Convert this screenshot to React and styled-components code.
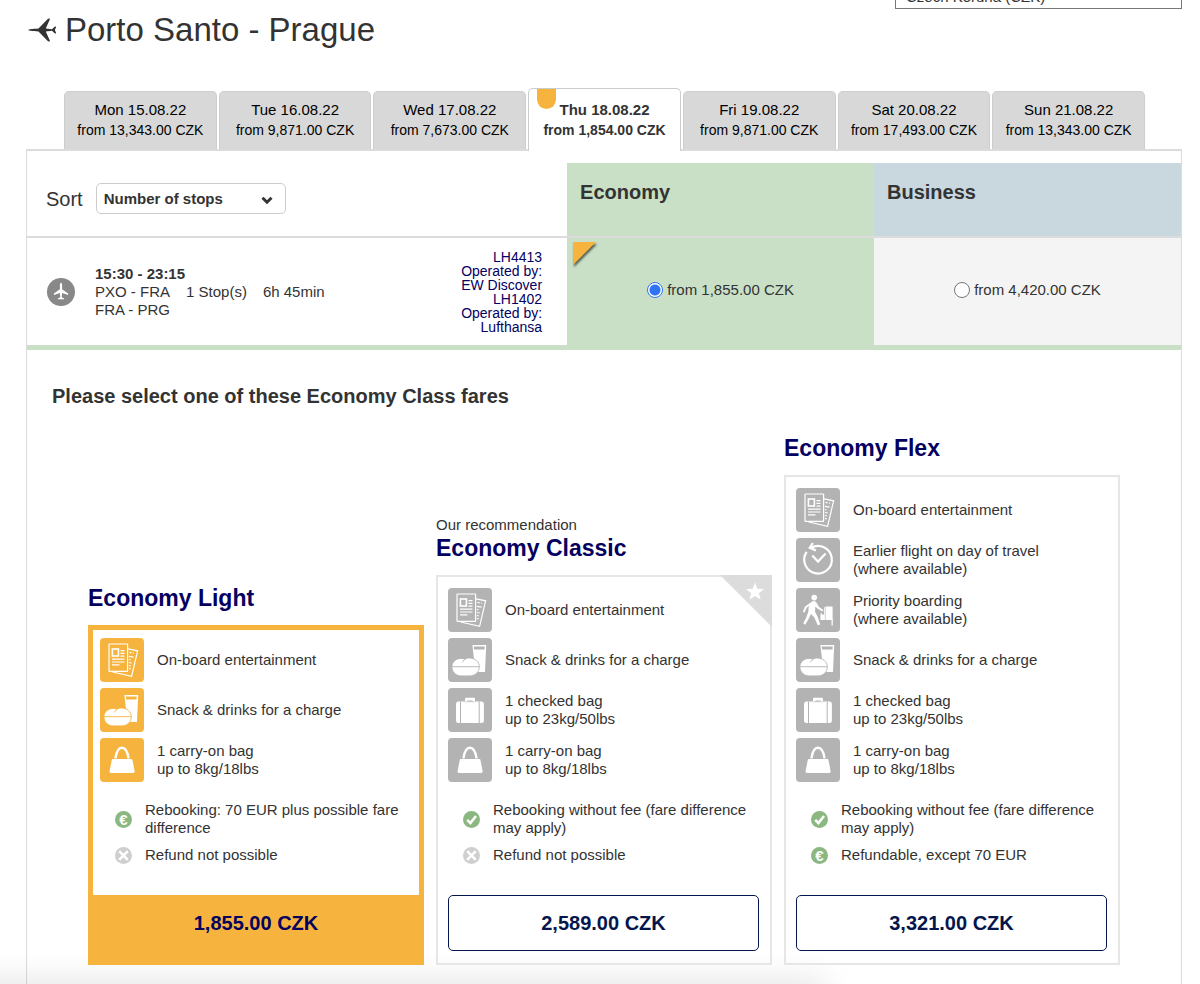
import React from "react";
import styled, { createGlobalStyle, css } from "styled-components";

const color = {
  text: "#333333",
  navy: "#05005f",
  ink: "#05164d",
  line: "#dcdcdc",
  tab: "#d8d8d8",
  green: "#c9e0c6",
  blue: "#c9d7df",
  orange: "#f6b43e",
  icon: "#b3b3b3",
  ok: "#8bb780",
  off: "#cfcfcf",
};

const GlobalStyle = createGlobalStyle`
  *, *::before, *::after { box-sizing: border-box; }
  body {
    margin: 0;
    background: #fff;
    color: ${color.text};
    font: 15px/18px "Liberation Sans", Arial, Helvetica, sans-serif;
  }
  button, select, input { font: inherit; color: inherit; margin: 0; }
  h1, h2, h3, p, ul { margin: 0; padding: 0; }
  ul { list-style: none; }
`;

const Page = styled.main`
  position: relative;
  display: flex;
  flex-direction: column;
  min-height: 100vh;
  padding: 0 18px 0 26px;
  overflow: hidden;
`;

const TopBar = styled.div`
  display: flex;
  justify-content: flex-end;
  align-items: flex-end;
  height: 9px;
  overflow: hidden;
`;

const CurrencySelect = styled.select`
  flex: none;
  appearance: none;
  width: 287px;
  height: 24px;
  padding: 0 10px;
  border: 1px solid #777;
  border-radius: 0;
  background: #fff;
`;

const RouteTitle = styled.h1`
  display: flex;
  align-items: center;
  gap: 8px;
  padding: 1px 0 0 2px;
  font-size: 33px;
  font-weight: 400;
  line-height: 40px;
`;

const Tabs = styled.nav`
  display: flex;
  align-items: flex-end;
  gap: 2px;
  margin-top: 38px;
  padding: 0 37px 0 38px;
`;

const Tab = styled.button`
  position: relative;
  flex: 1 1 0;
  min-width: 0;
  height: 58px;
  padding: 0 0 1px;
  border: 1px solid #cecece;
  border-bottom: 0;
  border-radius: 5px 5px 0 0;
  background: ${color.tab};
  color: #000;
  line-height: 20px;
  white-space: nowrap;
  ${(p) =>
    p.$active &&
    css`
      height: 63px;
      margin-bottom: -2px;
      padding-bottom: 0;
      border-color: #ccc;
      background: #fff;
      color: ${color.text};
      font-weight: 700;
    `}
`;

const TabDay = styled.span`
  display: block;
`;

const TabPrice = styled.span`
  display: block;
  font-size: 14px;
`;

const TabMarker = styled.span`
  position: absolute;
  top: 0;
  left: 8px;
  width: 19px;
  height: 20px;
  border-radius: 0 0 10px 10px;
  background: ${color.orange};
`;

const Panel = styled.section`
  flex: 1;
  padding-top: 12px;
  border: 1px solid ${color.line};
  border-top-width: 2px;
  border-bottom: 0;
`;

const FlightTable = styled.table`
  width: 100%;
  table-layout: fixed;
  border-collapse: separate;
  border-spacing: 0;
`;

const HeadCell = styled.th`
  height: 75px;
  padding: ${(p) => (p.$sort ? "0 0 2px 19px" : "17px 13px 0")};
  vertical-align: ${(p) => (p.$sort ? "middle" : "top")};
  border-bottom: 2px solid ${color.line};
  background: ${(p) => p.$bg || "transparent"};
  text-align: left;
  font-size: 20px;
  line-height: 24px;
  font-weight: ${(p) => (p.$sort ? 400 : 700)};
`;

const SortBox = styled.div`
  display: flex;
  align-items: center;
  gap: 13px;
`;

const SelectWrap = styled.span`
  position: relative;
  width: 190px;
  height: 31px;
  svg {
    position: absolute;
    right: 13px;
    top: 13px;
    pointer-events: none;
  }
`;

const SortSelect = styled.select`
  appearance: none;
  display: block;
  width: 100%;
  height: 100%;
  padding: 0 30px 0 7px;
  border: 1px solid #ccc;
  border-radius: 5px;
  background: #fff;
  font-size: 15px;
  font-weight: 700;
`;

const FlightCell = styled.td`
  height: 107px;
  padding: 0 25px 0 20px;
`;

const Flight = styled.div`
  display: flex;
  align-items: center;
  gap: 20px;
`;

const FlightTimes = styled.div`
  flex: 1;
`;

const Leg = styled.p`
  display: flex;
  gap: 16px;
`;

const Carriers = styled.p`
  color: ${color.navy};
  text-align: right;
  font-size: 14px;
  line-height: 14px;
`;

const PriceCell = styled.td`
  position: relative;
  padding: 0;
  background: ${(p) => p.$bg};
  text-align: center;
`;

const CornerFlag = styled.svg`
  position: absolute;
  top: 4px;
  left: 6px;
  filter: drop-shadow(1px 2px 1px rgba(0, 0, 0, 0.6));
`;

const RadioLabel = styled.label`
  display: inline-flex;
  align-items: center;
  gap: 4px;
`;

const Radio = styled.input`
  appearance: none;
  width: 16px;
  height: 16px;
  border: 1px solid #767676;
  border-radius: 50%;
  background: #fff;
  &:checked {
    border-color: #2f74f5;
    background: radial-gradient(circle, #2f74f5 5px, #fff 6px);
  }
`;

const Fares = styled.section`
  padding: 34px 61px 19px;
  border-top: 5px solid ${color.green};
`;

const FaresHeading = styled.h2`
  margin: 0 0 26px -36px;
  font-size: 20px;
  line-height: 24px;
`;

const FareList = styled.div`
  display: grid;
  grid-template-columns: repeat(3, 1fr);
  align-items: end;
  gap: 12px;
`;

const FareTitle = styled.h3`
  margin-bottom: 13px;
  color: ${color.navy};
  font-size: 23px;
  line-height: 28px;
`;

const Card = styled.div`
  position: relative;
  padding: ${(p) => (p.$selected ? "8px 7px 0 7px" : "11px 11px 12px 10px")};
  border: ${(p) => (p.$selected ? `5px solid ${color.orange}` : `2px solid #e6e6e6`)};
`;

const Perks = styled.ul`
  display: grid;
  gap: 6px;
`;

const Perk = styled.li`
  display: flex;
  align-items: center;
  gap: 13px;
  white-space: pre-line;
`;

const PerkIcon = styled.svg`
  flex: none;
  width: 44px;
  height: 44px;
  border-radius: 4px;
  background: ${(p) => p.$bg};
  color: ${(p) => p.$bg};
`;

const Terms = styled.ul`
  display: grid;
  gap: 9px;
  margin: 19px 0 31px;
  padding-left: 15px;
`;

const Term = styled.li`
  display: flex;
  align-items: center;
  gap: 13px;
`;

const Badge = styled.span`
  display: flex;
  flex: none;
  align-items: center;
  justify-content: center;
  width: 17px;
  height: 17px;
  border-radius: 50%;
  background: ${(p) => p.$bg};
  color: #fff;
  font-size: 15px;
  font-weight: 700;
  line-height: 17px;
`;

const PriceButton = styled.button`
  display: block;
  width: 100%;
  height: 56px;
  border: 1px solid ${color.ink};
  border-radius: 5px;
  background: #fff;
  color: ${color.ink};
  font-size: 20px;
  font-weight: 700;
  line-height: 24px;
  ${(p) =>
    p.$selected &&
    css`
      width: auto;
      min-width: calc(100% + 14px);
      height: 65px;
      margin: 0 -7px;
      padding-bottom: 10px;
      border: 0;
      border-radius: 0;
      background: ${color.orange};
      color: ${color.navy};
    `}
`;

const Ribbon = styled.svg`
  position: absolute;
  top: -2px;
  right: -2px;
`;

const BottomShade = styled.div`
  position: absolute;
  left: -40px;
  bottom: -20px;
  width: 72%;
  height: 20px;
  box-shadow: 0 0 32px 2px rgba(0, 0, 0, 0.13);
  pointer-events: none;
`;

const drawings = {
  news: (
    <g fill="none" stroke="#fff" strokeWidth="1.2">
      <path d="M28 10.8 37.6 12.8 31.6 38.4 12.6 34" />
      <path d="M29.5 14.4l2.2.4M33 15l1 .2M29 18.3l4.6.9M29 21.5l1.5.3M29 24.5l2.8.5M29 27.5l1.8.3M29 30.5l1.8.3" />
      <rect x="9" y="6" width="18.6" height="27.4" rx="0.6" />
      <rect x="12.4" y="11" width="6" height="7" strokeWidth="1.6" />
      <path d="M20.5 12.6h4M20.5 15.4h4M20.5 18.2h4M12 21.2h12.5M12 24h12.5M12 26.8h7.5" />
    </g>
  ),
  snack: (
    <g>
      <path fill="#fff" fillRule="evenodd" d="M24.4 7H38.2L37 34H27.4zM25.8 8.6l.3 3h10.400l.2-3z" />
      <path
        fill="#fff"
        stroke="currentColor"
        strokeWidth="0.9"
        d="M3.900 28.600C3.900 23.600 8.500 20.400 13 20.400 14.600 20.400 16 20.700 17 21.300 18.200 20.300 19.800 19.900 21.600 20 27 20.300 31.300 23.600 31.300 28.600 31.300 34.200 27.200 37.900 22 37.900H13C8 37.900 3.900 34.200 3.900 28.600z"
      />
      <path stroke="currentColor" strokeWidth="0.9" fill="none" d="M4 28.700h27.200M17 21.300Q15.200 22.300 14.400 24.400" />
    </g>
  ),
  checked: (
    <g>
      <path fill="#fff" fillRule="evenodd" d="M17 14v-3.200q0-1 1-1h8q1 0 1 1V14zM19.500 14h5v-1.600h-5z" />
      <rect x="8" y="13.600" width="27.900" height="21.400" rx="2.500" fill="#fff" />
      <path stroke="currentColor" strokeWidth="1" d="M12.500 13.600V35M31.200 13.600V35" />
      <path stroke="currentColor" strokeWidth="0.600" d="M17 13.800h10" />
    </g>
  ),
  carry: (
    <g>
      <path fill="none" stroke="#fff" strokeWidth="2.400" d="M15.400 20.400C16.500 13 19 9.800 21.900 9.800S27.500 13 28.600 20.400" />
      <path fill="#fff" d="M12.600 21h18.800q.8 0 1 .8l2.200 11.200q.3 2-1.700 2H11.300q-2 0-1.700-2l2.200-11.200q.2-.8.8-.8z" />
    </g>
  ),
  earlier: (
    <g fill="none" stroke="#fff" strokeWidth="2.200">
      <path d="M10.700 13.800A13.800 13.800 0 1 0 15 9.800" />
      <path d="M16.800 5 13.800 9.700 19.900 12.500" />
      <path d="M16.300 17.600 22 23.600 29.600 15.600" />
    </g>
  ),
  priority: (
    <g fill="#fff">
      <circle cx="18.200" cy="9.600" r="2.800" />
      <path d="M16.200 13.400q2.200-.8 3.900.6l2.800 4.700 4.600 3.500-1 1.400-5.200-3.200-2-2-.2 5.700 2.600 4.600 2.500 7.800-2.400.8-3.600-8-3.200-3.200-2.600 5.200-3.200 5.400-2-1.500 3.100-5.600 2-6.200.5-6-2 2.300-2.300 4.700-1.700-.5 2.200-5.500z" />
      <path d="M29.600 18.400h7v13.600h-7z" />
      <path d="M24.600 26.200l4 .6v5.200h-4zM35.500 31h1.300v6.500h-1.300z" />
      <path fill="none" stroke="#fff" strokeWidth="1" d="M25.200 25v7M28.700 19v13" />
    </g>
  ),
};

const perkText = {
  news: "On-board entertainment",
  earlier: "Earlier flight on day of travel\n(where available)",
  priority: "Priority boarding\n(where available)",
  snack: "Snack & drinks for a charge",
  checked: "1 checked bag\nup to 23kg/50lbs",
  carry: "1 carry-on bag\nup to 8kg/18lbs",
};

const tabs = [
  ["Mon 15.08.22", "from 13,343.00 CZK"],
  ["Tue 16.08.22", "from 9,871.00 CZK"],
  ["Wed 17.08.22", "from 7,673.00 CZK"],
  ["Thu 18.08.22", "from 1,854.00 CZK"],
  ["Fri 19.08.22", "from 9,871.00 CZK"],
  ["Sat 20.08.22", "from 17,493.00 CZK"],
  ["Sun 21.08.22", "from 13,343.00 CZK"],
];

const fares = [
  {
    name: "Economy Light",
    selected: true,
    perks: ["news", "snack", "carry"],
    terms: [
      ["fee", "Rebooking: 70 EUR plus possible fare difference"],
      ["no", "Refund not possible"],
    ],
    price: "1,855.00 CZK",
  },
  {
    name: "Economy Classic",
    recommended: true,
    perks: ["news", "snack", "checked", "carry"],
    terms: [
      ["yes", "Rebooking without fee (fare difference may apply)"],
      ["no", "Refund not possible"],
    ],
    price: "2,589.00 CZK",
  },
  {
    name: "Economy Flex",
    perks: ["news", "earlier", "priority", "snack", "checked", "carry"],
    terms: [
      ["yes", "Rebooking without fee (fare difference may apply)"],
      ["fee", "Refundable, except 70 EUR"],
    ],
    price: "3,321.00 CZK",
  },
];

function TermBadge({ kind }) {
  if (kind === "fee") return <Badge $bg={color.ok}>€</Badge>;
  return (
    <Badge $bg={kind === "yes" ? color.ok : color.off}>
      <svg width="17" height="17" fill="none" stroke="#fff" strokeWidth="2.600" aria-hidden="true">
        <path d={kind === "yes" ? "M4.200 8.800 7.400 12 13 5" : "M4.200 4.200l8.600 8.600M12.800 4.200l-8.600 8.600"} />
      </svg>
    </Badge>
  );
}

function Fare({ fare }) {
  return (
    <article>
      {fare.recommended && <p>Our recommendation</p>}
      <FareTitle>{fare.name}</FareTitle>
      <Card $selected={fare.selected}>
        {fare.recommended && (
          <Ribbon width="52" height="52" aria-hidden="true">
            <path fill={color.line} d="M0 0h52v52z" />
            <path fill="#fff" d="M35 7.500l2.300 6.200 6.700.3-5.200 4.200 1.800 6.400-5.600-3.700-5.600 3.700 1.800-6.400L26 14l6.700-.3z" />
          </Ribbon>
        )}
        <Perks>
          {fare.perks.map((id) => (
            <Perk key={id}>
              <PerkIcon viewBox="0 0 44 44" $bg={fare.selected ? color.orange : color.icon} aria-hidden="true">
                {drawings[id]}
              </PerkIcon>
              {perkText[id]}
            </Perk>
          ))}
        </Perks>
        <Terms>
          {fare.terms.map(([kind, text]) => (
            <Term key={text}>
              <TermBadge kind={kind} />
              <span>{text}</span>
            </Term>
          ))}
        </Terms>
        <PriceButton type="button" $selected={fare.selected}>
          {fare.price}
        </PriceButton>
      </Card>
    </article>
  );
}

export default function App() {
  return (
    <>
      <GlobalStyle />
      <Page>
        <BottomShade />
        <TopBar>
          <CurrencySelect aria-label="Currency">
            <option>Czech Koruna (CZK)</option>
          </CurrencySelect>
        </TopBar>
        <RouteTitle>
          <svg width="29" height="24" viewBox="0 0 29 24" fill={color.text} aria-hidden="true">
            <path d="M0 12C1.500 11 3.500 10.900 10.500 10.500L20 .8Q21.500 0 22 .9L17.800 10.400 24 11.300 26.300 8.900Q27.600 8.200 28.200 8.800L26.900 12 28.200 15.200Q27.600 15.800 26.300 15.100L24 12.700 17.800 13.600 22 23.100Q21.500 24 20 23.200L10.500 13.500C3.500 13.100 1.500 13 0 12z" />
          </svg>
          Porto Santo - Prague
        </RouteTitle>
        <Tabs aria-label="Departure day">
          {tabs.map(([day, price], i) => (
            <Tab key={day} type="button" $active={i === 3} aria-pressed={i === 3}>
              {i === 3 && <TabMarker />}
              <TabDay>{day}</TabDay>
              <TabPrice>{price}</TabPrice>
            </Tab>
          ))}
        </Tabs>
        <Panel>
          <FlightTable>
            <colgroup>
              <col width="46.800%" />
              <col width="26.600%" />
              <col width="26.600%" />
            </colgroup>
            <thead>
              <tr>
                <HeadCell $sort>
                  <SortBox>
                    <label htmlFor="sort">Sort</label>
                    <SelectWrap>
                      <SortSelect id="sort">
                        <option>Number of stops</option>
                      </SortSelect>
                      <svg width="12" height="9" fill="none" stroke={color.text} strokeWidth="3" aria-hidden="true">
                        <path d="M1.500 1.800 6 6.200 10.500 1.800" />
                      </svg>
                    </SelectWrap>
                  </SortBox>
                </HeadCell>
                <HeadCell scope="col" $bg={color.green}>Economy</HeadCell>
                <HeadCell scope="col" $bg={color.blue}>Business</HeadCell>
              </tr>
            </thead>
            <tbody>
              <tr>
                <FlightCell>
                  <Flight>
                    <svg width="28" height="28" aria-hidden="true">
                      <circle cx="14" cy="14" r="14" fill="#888" />
                      <path
                        fill="#fff"
                        d="M14 4.400q1 .6 1.100 2.600v4.200l6 4.300v1.500l-6-2-.4 4.300 2.300 1.200v1l-2.500-.4-.5.900-.5-.9-2.500.4v-1l2.300-1.200-.4-4.300-6 2v-1.500l6-4.300V7q.1-2 1.100-2.600z"
                      />
                    </svg>
                    <FlightTimes>
                      <p><strong>15:30 - 23:15</strong></p>
                      <Leg>
                        <span>PXO - FRA</span>
                        <span>1 Stop(s)</span>
                        <span>6h 45min</span>
                      </Leg>
                      <p>FRA - PRG</p>
                    </FlightTimes>
                    <Carriers>
                      LH4413<br />Operated by:<br />EW Discover<br />
                      LH1402<br />Operated by:<br />Lufthansa
                    </Carriers>
                  </Flight>
                </FlightCell>
                <PriceCell $bg={color.green}>
                  <CornerFlag width="23" height="23" aria-hidden="true">
                    <path fill={color.orange} d="M0 0h23L0 23z" />
                  </CornerFlag>
                  <RadioLabel>
                    <Radio type="radio" name="cabin" defaultChecked />
                    from 1,855.00 CZK
                  </RadioLabel>
                </PriceCell>
                <PriceCell $bg="#f4f4f4">
                  <RadioLabel>
                    <Radio type="radio" name="cabin" />
                    from 4,420.00 CZK
                  </RadioLabel>
                </PriceCell>
              </tr>
            </tbody>
          </FlightTable>
          <Fares>
            <FaresHeading>Please select one of these Economy Class fares</FaresHeading>
            <FareList>
              {fares.map((fare) => (
                <Fare key={fare.name} fare={fare} />
              ))}
            </FareList>
          </Fares>
        </Panel>
      </Page>
    </>
  );
}
